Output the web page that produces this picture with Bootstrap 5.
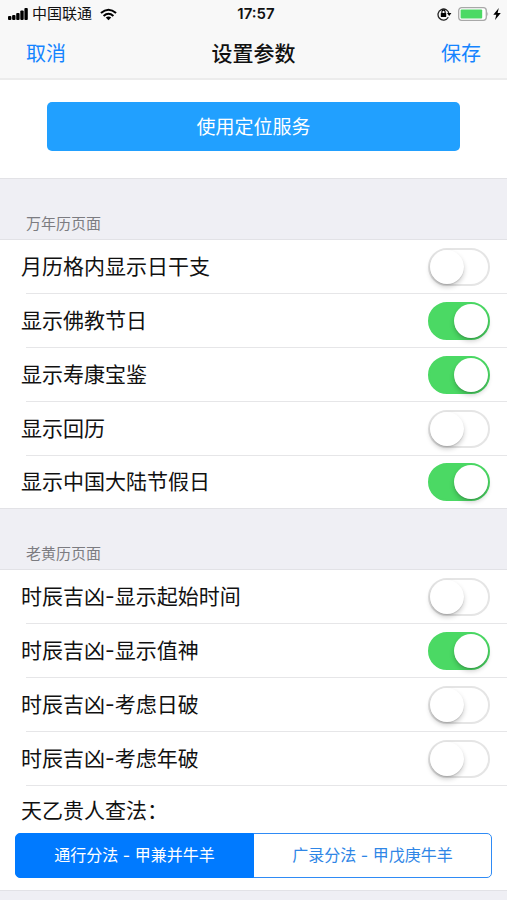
<!DOCTYPE html>
<html lang="zh-CN">
<head>
<meta charset="utf-8">
<meta name="viewport" content="width=device-width, initial-scale=1">
<title>设置参数</title>
<link href="https://cdn.jsdelivr.net/npm/bootstrap@5.3.0/dist/css/bootstrap.min.css" rel="stylesheet">
<style>
  body { font-family: "Inter", "Noto Sans CJK SC", sans-serif; background: #efeff4; color: #111; line-height: 1.5; }
  .top-bar { background: #f8f8f8; border-bottom: 2px solid #ececec; height: 80px; }
  .thirds { display: grid; grid-template-columns: 1fr auto 1fr; align-items: center; }
  .status { height: 28px; font-size: 15px; padding: 0 6px 0 8px; }
  .clock { font-size: 15px; font-weight: 600; padding-left: 3px; }
  .titles { height: 50px; padding: 1px 26px 0; font-size: 20px; }
  .titles h1 { font-size: 21px; font-weight: 500; }
  .titles a { color: #1484ff; }
  .locate { padding: 22px 47px 27px; border-bottom: 1px solid #e2e2e6; }
  .btn-locate { --bs-btn-bg: #21a0ff; --bs-btn-hover-bg: #1293f2; --bs-btn-color: #fff; --bs-btn-hover-color: #fff; font-size: 19px; height: 49px; padding: 3px 0 0; border: 0; border-radius: 5px; }
  .group-title { height: 60px; padding: 0 26px 6px; font-size: 15px; color: #7c7c81; font-weight: 400; }
  .settings { border-top: 1px solid #e2e2e6; border-bottom: 1px solid #e2e2e6; }
  .setting { min-height: 53px; padding: 0 17px 0 21px; font-size: 21px; }
  .setting + .setting { min-height: 54px; padding-top: 1px; background: linear-gradient(#e6e6e8, #e6e6e8) 26px 0 / 100% 1px no-repeat; }
  .setting:last-child { min-height: 53px !important; }
  .setting .form-check-input { width: 62px; height: 38px; margin: 0; border: 2px solid #e5e5e5; border-radius: 19px; background: #fff; appearance: none; cursor: pointer; display: flex; align-items: center; flex: none; }
  .setting .form-check-input::before { content: ""; width: 34px; height: 34px; border-radius: 50%; background: #fff; box-shadow: 0 3px 5px rgba(0,0,0,.2), 0 1px 1px rgba(0,0,0,.12); }
  .setting .form-check-input:checked { background: #4bd964; border-color: #4bd964; justify-content: flex-end; }
  .method { padding: 0 15px 12px; background: linear-gradient(#e6e6e8, #e6e6e8) 26px 0 / 100% 1px no-repeat; }
  .method legend { font-size: 21px; line-height: 32px; padding: 10px 6px 6px; margin: 0; }
  .method .btn { --bs-btn-color: #2f86e6; --bs-btn-border-color: #2f8bf5; --bs-btn-active-bg: #007aff; --bs-btn-active-border-color: #007aff; --bs-btn-active-color: #fff; --bs-btn-border-radius: 5px; height: 45px; font-size: 16px; padding: 0; line-height: 43px; flex: 1 1 0; }
</style>
</head>
<body>
<header class="top-bar">
  <div class="status thirds">
    <div class="d-flex align-items-center">
      <svg width="20" height="12" viewBox="0 0 20 12" aria-hidden="true"><rect x="0" y="8" width="3.4" height="4" rx="1"/><rect x="4.1" y="7" width="3.4" height="5" rx="1"/><rect x="8.2" y="5" width="3.4" height="7" rx="1"/><rect x="12.3" y="2.5" width="3.4" height="9.5" rx="1"/><rect x="16.4" y="0" width="3.4" height="12" rx="1"/></svg>
      <span class="ms-1">中国联通</span>
      <svg class="ms-2" width="17" height="13" viewBox="0 0 18 13" fill="none" stroke="#000" stroke-width="2.2" aria-hidden="true"><path d="M1 5Q9-2 17 5"/><path d="M3.8 8Q9 3.4 14.2 8"/><path d="M9 12.6 6.1 9.7Q9 7.6 11.9 9.7Z" fill="#000" stroke="none"/></svg>
    </div>
    <div class="clock">17:57</div>
    <div class="d-flex align-items-center justify-content-end">
      <svg width="15" height="14" viewBox="0 0 15 14" aria-hidden="true"><path d="M11.3 10.3A5.5 5.5 0 1 1 12 7" fill="none" stroke="#222" stroke-width="1.3"/><path d="M10 6h4.4L12.2 9z"/><rect x="3.8" y="6" width="5.4" height="4" rx=".5"/><path d="M4.9 6V4.7a1.6 1.6 0 0 1 3.2 0V6" fill="none" stroke="#000" stroke-width="1.1"/></svg>
      <svg class="ms-1" width="33" height="14" viewBox="0 0 33 14" aria-hidden="true"><rect x="2.7" y=".7" width="27.6" height="12.6" rx="3" fill="#fff" stroke="#a8a8a8" stroke-width="1.3"/><rect x="4.6" y="2.5" width="21.6" height="9" rx="1" fill="#4bd964"/><path d="M31.4 4.8q1.6 2.2 0 4.4z" fill="#a8a8a8"/></svg>
      <svg class="ms-1" width="8" height="12" viewBox="0 0 8 12" aria-hidden="true"><path d="M5.8 0 .3 6.8h3L2 12 7.8 5H4.6z"/></svg>
    </div>
  </div>
  <nav class="titles thirds">
    <a href="#" class="text-decoration-none">取消</a>
    <h1 class="m-0">设置参数</h1>
    <a href="#" class="text-decoration-none text-end">保存</a>
  </nav>
</header>

<main>
  <div class="locate bg-white">
    <button type="button" class="btn btn-locate w-100">使用定位服务</button>
  </div>

  <h2 class="group-title d-flex align-items-end m-0">万年历页面</h2>
  <div class="settings bg-white">
    <div class="setting d-flex align-items-center justify-content-between"><label for="s1">月历格内显示日干支</label><input class="form-check-input" type="checkbox" role="switch" id="s1"></div>
    <div class="setting d-flex align-items-center justify-content-between"><label for="s2">显示佛教节日</label><input class="form-check-input" type="checkbox" role="switch" id="s2" checked></div>
    <div class="setting d-flex align-items-center justify-content-between"><label for="s3">显示寿康宝鉴</label><input class="form-check-input" type="checkbox" role="switch" id="s3" checked></div>
    <div class="setting d-flex align-items-center justify-content-between"><label for="s4">显示回历</label><input class="form-check-input" type="checkbox" role="switch" id="s4"></div>
    <div class="setting d-flex align-items-center justify-content-between"><label for="s5">显示中国大陆节假日</label><input class="form-check-input" type="checkbox" role="switch" id="s5" checked></div>
  </div>

  <h2 class="group-title d-flex align-items-end m-0">老黄历页面</h2>
  <div class="settings bg-white">
    <div class="setting d-flex align-items-center justify-content-between"><label for="s6">时辰吉凶-显示起始时间</label><input class="form-check-input" type="checkbox" role="switch" id="s6"></div>
    <div class="setting d-flex align-items-center justify-content-between"><label for="s7">时辰吉凶-显示值神</label><input class="form-check-input" type="checkbox" role="switch" id="s7" checked></div>
    <div class="setting d-flex align-items-center justify-content-between"><label for="s8">时辰吉凶-考虑日破</label><input class="form-check-input" type="checkbox" role="switch" id="s8"></div>
    <div class="setting d-flex align-items-center justify-content-between"><label for="s9">时辰吉凶-考虑年破</label><input class="form-check-input" type="checkbox" role="switch" id="s9"></div>
    <fieldset class="method">
      <legend>天乙贵人查法：</legend>
      <div class="btn-group d-flex">
        <input type="radio" class="btn-check" name="method" id="m1" checked><label class="btn" for="m1">通行分法 - 甲兼并牛羊</label>
        <input type="radio" class="btn-check" name="method" id="m2"><label class="btn" for="m2">广录分法 - 甲戊庚牛羊</label>
      </div>
    </fieldset>
  </div>
</main>
<script src="https://cdn.jsdelivr.net/npm/bootstrap@5.3.0/dist/js/bootstrap.bundle.min.js"></script>
</body>
</html>
